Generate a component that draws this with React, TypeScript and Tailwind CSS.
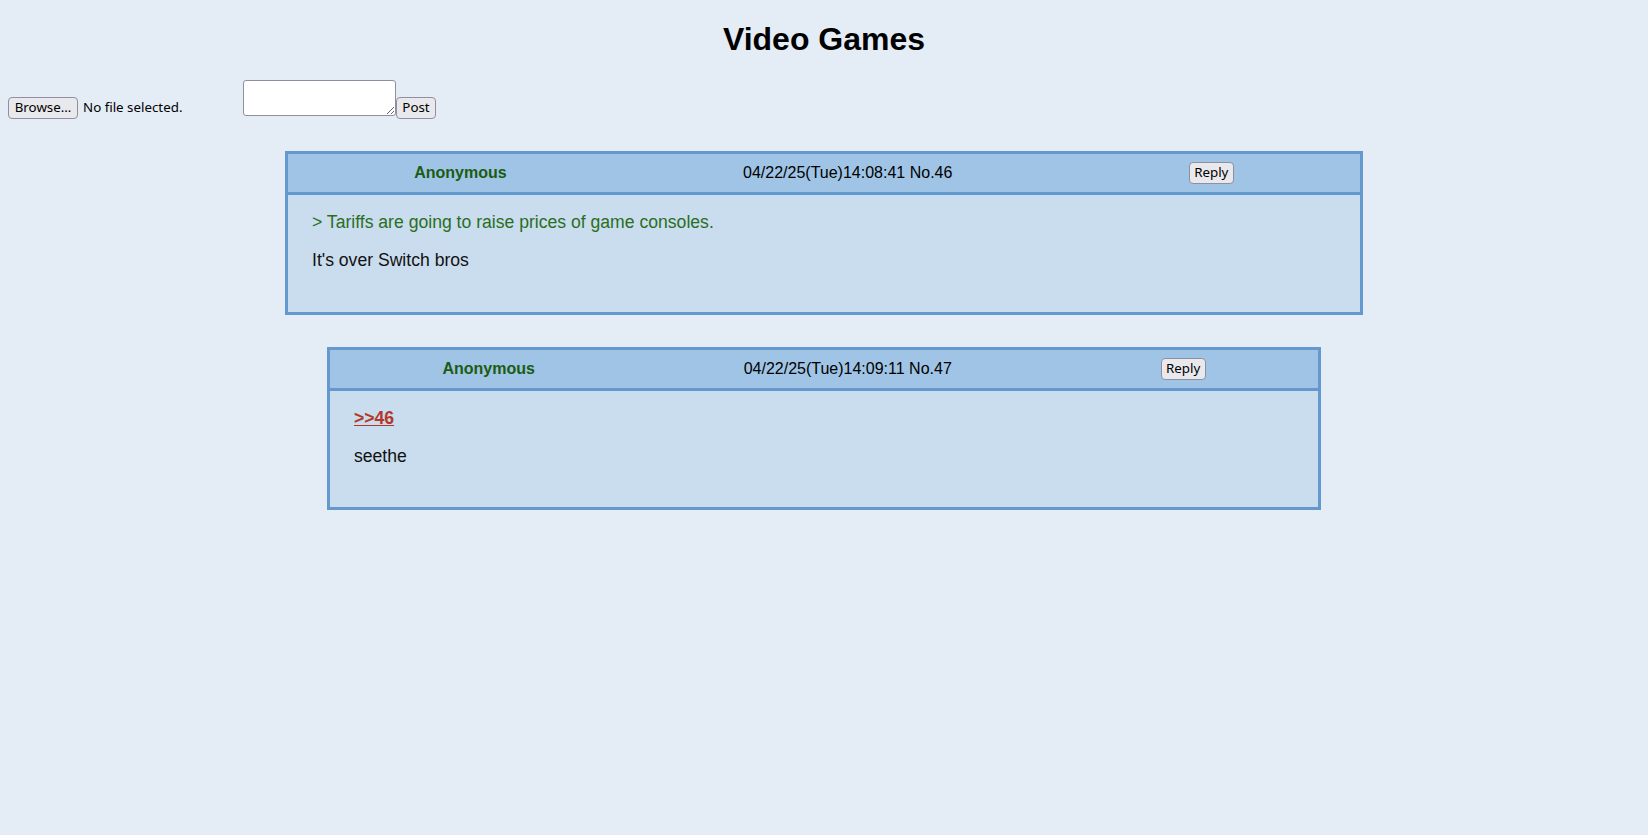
import React from 'react';

type Post = {
  no: number;
  name: string;
  date: string;
  width: string;
  lines: { kind: 'green' | 'quote' | 'text'; text: string }[];
  bodyPad: string;
};

const POSTS: Post[] = [
  {
    no: 46,
    name: 'Anonymous',
    date: '04/22/25(Tue)14:08:41',
    width: 'w-[1078px]',
    bodyPad: 'pb-[41px]',
    lines: [
      { kind: 'green', text: '> Tariffs are going to raise prices of game consoles.' },
      { kind: 'text', text: "It's over Switch bros" },
    ],
  },
  {
    no: 47,
    name: 'Anonymous',
    date: '04/22/25(Tue)14:09:11',
    width: 'w-[994px]',
    bodyPad: 'pb-[40px]',
    lines: [
      { kind: 'quote', text: '>>46' },
      { kind: 'text', text: 'seethe' },
    ],
  },
];

const uiFont = "font-['Noto_Sans','Open_Sans',sans-serif]";

const PostBox: React.FC<{ post: Post }> = ({ post }) => (
  <div className={`${post.width} border-[3px] border-[#6399cf] bg-[#c9ddee]`}>
    <div className="flex h-[41px] items-center justify-around border-b-[3px] border-[#6399cf] bg-[#9fc4e5] px-2 text-[16px]">
      <span className="font-bold text-[#1b5c12]">{post.name}</span>
      <span className="text-black">
        {post.date} No.{post.no}
      </span>
      <button
        type="button"
        className={`${uiFont} flex h-[22px] w-[45px] items-center justify-center rounded-[4px] border border-[#8f8f9d] bg-[#e9e9ed] text-[13.33px] text-black`}>
        Reply
      </button>
    </div>
    <div className={`flex flex-col gap-4 px-6 pt-4 ${post.bodyPad} text-[17.6px] leading-[22px]`}>
      {post.lines.map((line, i) => {
        if (line.kind === 'green') {
          return (
            <p key={i} className="text-[#2a6e1f]">
              {line.text}
            </p>
          );
        }
        if (line.kind === 'quote') {
          return (
            <p key={i}>
              <a href="#p46" className="font-bold text-[#b3382a] underline">
                {line.text}
              </a>
            </p>
          );
        }
        return (
          <p key={i} className="text-[#111]">
            {line.text}
          </p>
        );
      })}
    </div>
  </div>
);

const App: React.FC = () => {
  return (
    <div className="min-h-screen bg-[#e4ecf6] font-['Liberation_Sans',Arial,sans-serif] text-black">
      <h1 className="pt-[21px] text-center text-[32px] font-bold leading-[37px]">Video Games</h1>

      {/* post form */}
      <form className={`${uiFont} mt-[22px] flex items-start px-2 text-[13.33px]`}>
        <div className="mt-[17px] flex w-[235px] items-center">
          <button
            type="button"
            className="flex h-[22px] w-[70px] items-center justify-center rounded-[4px] border border-[#8f8f9d] bg-[#e9e9ed] text-black">
            Browse…
          </button>
          <span className="ml-[5px]">No file selected.</span>
        </div>
        <textarea className="h-[36px] w-[153px] rounded-[3px] border border-[#8f8f9d] bg-white" />
        <button
          type="submit"
          className="mt-[17px] flex h-[22px] w-[40px] items-center justify-center rounded-[4px] border border-[#8f8f9d] bg-[#e9e9ed] text-black">
          Post
        </button>
      </form>

      <div className="mt-[32px] flex flex-col items-center gap-8">
        {POSTS.map((post) => (
          <PostBox key={post.no} post={post} />
        ))}
      </div>
    </div>
  );
};

export default App;
